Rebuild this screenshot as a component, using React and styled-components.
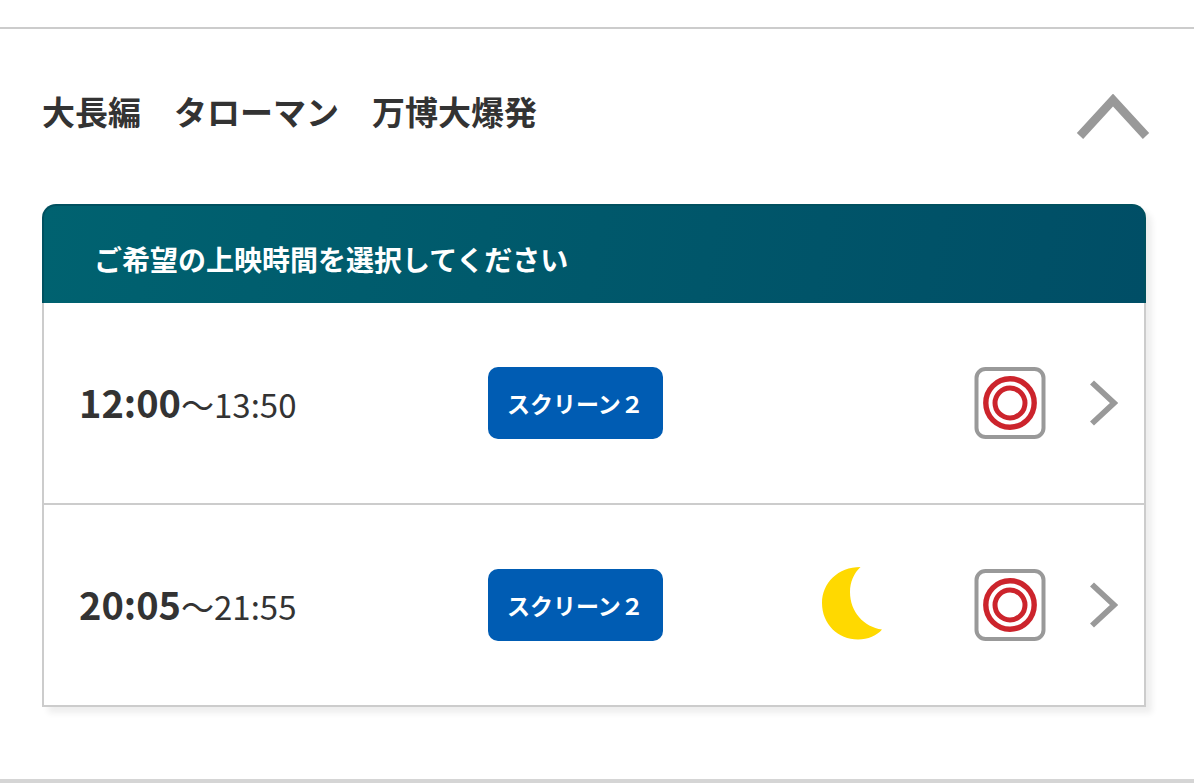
import React, { useState } from 'react'
import styled, { createGlobalStyle } from 'styled-components'


const GlobalStyle = createGlobalStyle`
  * {
    box-sizing: border-box;
  }

  body {
    margin: 0;
    background-color: #fff;
    color: #333;
    font-family: "Noto Sans CJK JP", sans-serif;
  }
`

const Movie = styled.section`
  margin-top: 27px;
  padding: 0 48px 72px 42px;
  border-top: 2px solid #ccc;
  border-bottom: 4px solid #d5d5d5;
`

const Title = styled.h2`
  margin: 0;
  font-size: 33px;
  line-height: 48px;
`

const TitleButton = styled.button`
  display: flex;
  justify-content: space-between;
  align-items: center;
  width: 100%;
  height: 175px;
  padding: 0 0 12px;
  border: 0;
  background: none;
  color: inherit;
  font: inherit;
  text-align: left;
  cursor: pointer;
`

const Arrow = styled.svg`
  flex: none;
  margin: 12px -4px 0 0;
  transform: ${props => props.$open ? "none" : "rotate(180deg)"};
`

const Schedule = styled.div`
  border-radius: 14px 14px 0 0;
  box-shadow: 6px 6px 6px rgba(0, 0, 0, 0.07);
`

const ScheduleHeader = styled.p`
  margin: 0;
  padding: 30px 50px 20px;
  border: 2px solid #00505f;
  border-bottom: 0;
  border-radius: 14px 14px 0 0;
  background: linear-gradient(100deg, #006270, #004e66);
  background-origin: border-box;
  color: #fff;
  font-size: 28px;
  font-weight: bold;
  line-height: 47px;
`

const List = styled.ul`
  margin: 0;
  padding: 0;
  border: 2px solid #ccc;
  border-top: 0;
  list-style: none;
`

const Item = styled.li`
  & + & {
    border-top: 2px solid #ccc;
  }
`

const Row = styled.a`
  display: grid;
  grid-template-columns: minmax(220px, 409px) 1fr auto auto auto;
  align-items: center;
  min-height: 200px;
  padding: 0 26px 0 35px;
  background-color: #fff;
  color: inherit;
  text-decoration: none;
`

const Time = styled.span`
  font-size: 33px;
  line-height: 56px;
  white-space: nowrap;
`

const Start = styled.strong`
  font-size: 38px;
`

const Screen = styled.span`
  justify-self: start;
  padding: 0 19px;
  border-radius: 10px;
  background-color: #005cb3;
  color: #fff;
  font-size: 23px;
  font-weight: bold;
  line-height: 72px;
  white-space: nowrap;
`

const Late = styled.span`
  display: flex;
  margin-right: 91px;
`

const Status = styled.span`
  display: flex;
  margin-right: 44px;
`

const Next = styled.span`
  display: flex;
`

const shows = [
  { id: 1, start: "12:00", end: "13:50", screen: "スクリーン２", late: false },
  { id: 2, start: "20:05", end: "21:55", screen: "スクリーン２", late: true },
]

function MoonIcon() {
  return (
    <svg width="61" height="78" viewBox="0 0 61 78" aria-hidden="true">
      <path d="M38.5 1C16 1 0 17 0 37C0 58 16 73.500 36 73.500C46 73.500 55 69.500 60 63.500C42 61 28 46 28 26C28 16 32 7 38.500 1Z" fill="#ffd900" />
    </svg>
  )
}

function VacantIcon() {
  return (
    <svg width="72" height="72" viewBox="0 0 72 72" fill="none" aria-hidden="true">
      <rect x="2.5" y="2" width="67" height="68" rx="9" stroke="#999" strokeWidth="4" />
      <circle cx="36" cy="36" r="24.2" stroke="#cc242c" strokeWidth="5.4" />
      <circle cx="36" cy="36" r="15" stroke="#cc242c" strokeWidth="5" />
    </svg>
  )
}

function ChevronIcon() {
  return (
    <svg width="28" height="46" viewBox="0 0 28 46" fill="none" aria-hidden="true">
      <path d="M2 2.5L24 23L2 43.5" stroke="#999" strokeWidth="5.8" />
    </svg>
  )
}

export default function App() {
  const [open, setOpen] = useState(true)

  function renderShow(show) {
    return (
      <Item key={show.id}>
        <Row href="#">
          <Time><Start>{show.start}</Start>～{show.end}</Time>
          <Screen>{show.screen}</Screen>
          <Late>{show.late && <MoonIcon />}</Late>
          <Status><VacantIcon /></Status>
          <Next><ChevronIcon /></Next>
        </Row>
      </Item>
    )
  }

  return (
    <main>
      <GlobalStyle />
      <Movie>
        <Title>
          <TitleButton type="button" aria-expanded={open} onClick={() => setOpen(!open)}>
            大長編　タローマン　万博大爆発
            <Arrow $open={open} width="74" height="46" viewBox="0 0 74 46" fill="none" aria-hidden="true">
              <path d="M4 42L37 6L70 42" stroke="#999" strokeWidth="8.6" />
            </Arrow>
          </TitleButton>
        </Title>
        {open && (
          <Schedule>
            <ScheduleHeader>ご希望の上映時間を選択してください</ScheduleHeader>
            <List>{shows.map(renderShow)}</List>
          </Schedule>
        )}
      </Movie>
    </main>
  )
}
